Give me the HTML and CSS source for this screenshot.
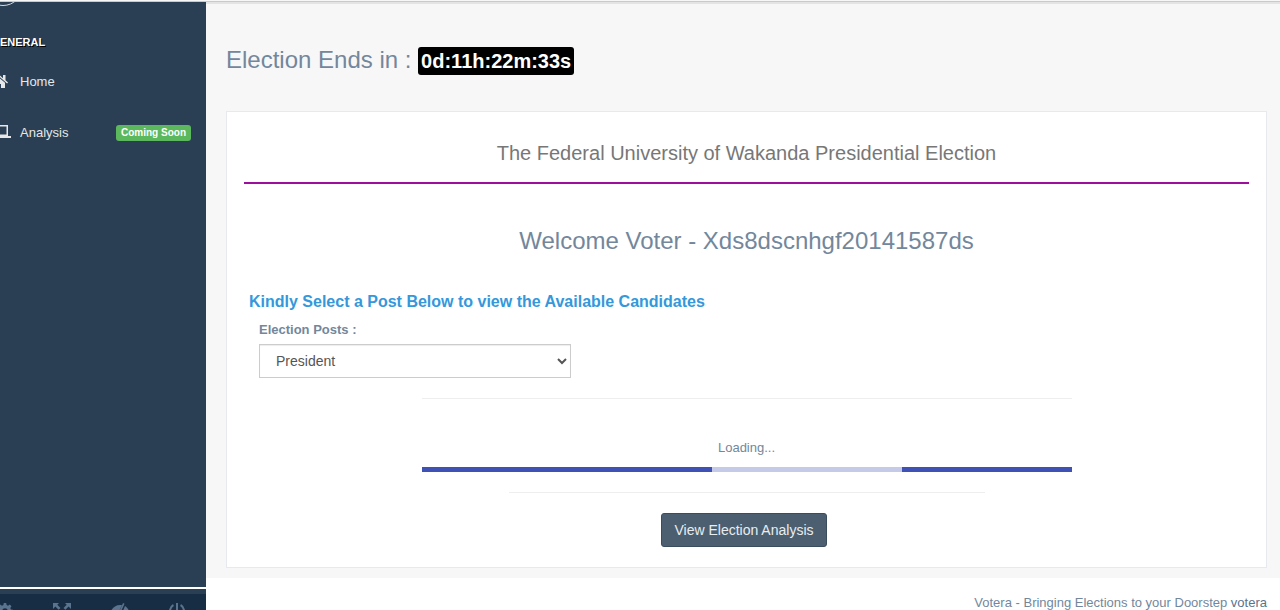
FILE: index.html
```html
<!DOCTYPE html>
<html lang="en">
<head>
    <meta charset="UTF-8">
    <meta name="viewport" content="width=device-width, initial-scale=1.0">
    <title>Votera</title>
    <link rel="stylesheet" href="styles.css">
</head>
<body>
    <div class="top-line"></div>
    <div class="main-container">
        <aside class="left-col">
            <div class="sidebar">
                <div class="profile-pic"></div>
                <h3 class="menu-title">eneral</h3>
                <nav class="side-menu">
                    <a href="#home">
                        <svg class="menu-icon" viewBox="0 0 20 16" aria-hidden="true">
                            <path d="M8.500 4 3 8.800V14h4v-4h3v4h4V8.800z"/>
                            <path d="M8.500 1 12 4.200V1h2.500v5.300l2.500 2.200-.9 1L8.500 2.900 1 9.500l-.9-1z"/>
                        </svg>
                        Home
                    </a>
                    <a href="#analysis">
                        <svg class="menu-icon" viewBox="0 0 20 16" aria-hidden="true">
                            <path fill-rule="evenodd" d="M3 0h14v11H3zM4.500 1.500v8h11v-8z"/>
                            <path d="M0 11h20v2H0z"/>
                        </svg>
                        Analysis
                        <span class="label-success">Coming Soon</span>
                    </a>
                </nav>
            </div>
            <div class="sidebar-footer">
                <a href="#settings" aria-label="Settings">
                    <svg viewBox="0 0 16 16" aria-hidden="true">
                        <path fill-rule="evenodd" d="M6.800 0h2.400l.4 2.100 1.400.6L12.800 1.500l1.700 1.700L13.300 5l.6 1.400 2.100.4v2.400l-2.100.4-.6 1.400 1.200 1.800-1.700 1.700-1.800-1.200-1.400.6-.4 2.100H6.800l-.4-2.100-1.400-.6-1.800 1.200-1.700-1.700L2.700 11l-.6-1.400L0 9.200V6.800l2.100-.4L2.700 5 1.500 3.200l1.700-1.700L5 2.700l1.400-.6zM8 5.200a2.800 2.800 0 1 0 0 5.600 2.800 2.800 0 0 0 0-5.600z"/>
                    </svg>
                </a>
                <a href="#fullscreen" aria-label="Full screen">
                    <svg viewBox="0 0 18 16" aria-hidden="true">
                        <path d="M0 0h6L4.300 1.700l3.200 3.200-1.900 1.900-3.200-3.200L0 6zM18 0v6l-2.400-2.400-3.200 3.200-1.900-1.900 3.200-3.200L12 0zM0 16v-6l2.400 2.400 3.200-3.200 1.900 1.900-3.200 3.200L6 16zM18 16h-6l1.700-1.700-3.200-3.200 1.900-1.900 3.200 3.200L18 10z"/>
                    </svg>
                </a>
                <a href="#lock" aria-label="Lock">
                    <svg viewBox="0 0 18 16" aria-hidden="true">
                        <path d="M11 2.100 5.600 13.500C3.200 12.500 1.200 10.600 0 8c1.600-3.500 4.800-6 9-6 .7 0 1.400 0 2 .1z"/>
                        <path d="M12 0l1.500.7L6.600 16l-1.500-.7z"/>
                        <path d="M14 3c1.700 1 3.100 2.800 4 5-1.600 3.500-4.800 5.800-8.500 6z"/>
                    </svg>
                </a>
                <a href="#logout" aria-label="Logout">
                    <svg viewBox="0 0 18 16" aria-hidden="true">
                        <path d="M8 0h2v8H8zM5 1l.9 1.900a6 6 0 1 0 6.200 0L13 1a8 8 0 1 1-8 0z"/>
                    </svg>
                </a>
            </div>
        </aside>
        <div class="right-col">
            <main>
                <h1 class="page-title">Election Ends in : <span class="timer">0d:11h:22m:33s</span></h1>
                <section class="panel">
                    <h2 class="election-title">The Federal University of Wakanda Presidential Election</h2>
                    <h3 class="welcome">Welcome Voter - Xds8dscnhgf20141587ds</h3>
                    <h4 class="instruction">Kindly Select a Post Below to view the Available Candidates</h4>
                    <form class="post-form">
                        <label for="post">Election Posts :</label>
                        <select id="post" name="post">
                            <option>President</option>
                        </select>
                    </form>
                    <div class="loader">
                        <p>Loading...</p>
                        <div class="progress"><div class="progress-gap"></div></div>
                    </div>
                    <hr class="divider">
                    <div class="actions">
                        <button type="button" class="btn-dark">View Election Analysis</button>
                    </div>
                </section>
            </main>
            <footer>Votera - Bringing Elections to your Doorstep <a href="#votera">votera</a></footer>
        </div>
    </div>
</body>
</html>
```

FILE: styles.css
```css
* {
    box-sizing: border-box;
}
body {
    margin: 0;
    height: 100vh;
    display: flex;
    flex-direction: column;
    overflow: hidden;
    font-family: "Liberation Sans", Arial, sans-serif;
    font-size: 13px;
    line-height: 18px;
    color: #73879C;
    background-color: #fff;
}
h1, h2, h3, h4, p {
    margin: 0;
    font-weight: normal;
}
a {
    text-decoration: none;
}
.top-line {
    height: 2px;
    flex-shrink: 0;
    background-color: #f7f7f7;
    border-bottom: 1px solid #c8cacb;
}
.main-container {
    flex: 1;
    min-height: 0;
    display: flex;
}

/* sidebar */
.left-col {
    width: 230px;
    margin-left: -24px;
    flex-shrink: 0;
    display: flex;
    flex-direction: column;
}
.sidebar {
    flex: 1;
    overflow: hidden;
    background-color: #2A3F54;
}
.profile-pic {
    width: 40px;
    height: 40px;
    margin: -36px 0 0 7px;
    border: 1px solid #d5dbe0;
    border-radius: 50%;
}
.menu-title {
    padding-left: 24px;
    margin-top: 27px;
    color: #fff;
    font-size: 11px;
    font-weight: bold;
    text-transform: uppercase;
    text-shadow: 1px 1px #000;
}
.side-menu {
    margin-top: 5px;
}
.side-menu a {
    display: flex;
    align-items: center;
    height: 51px;
    padding: 0 15px;
    color: #E7E7E7;
}
.menu-icon {
    width: 20px;
    height: 16px;
    margin-right: 9px;
    fill: #E7E7E7;
}
.label-success {
    margin-left: auto;
    padding: 0 5px;
    border-radius: 3px;
    background-color: #5cb85c;
    color: #fff;
    font-size: 10px;
    font-weight: bold;
    line-height: 16px;
}
.sidebar-footer {
    height: 23px;
    display: flex;
    overflow: hidden;
    border-top: 2px solid #fff;
    background-color: #2A3F54;
}
.sidebar-footer a {
    flex: 1;
    height: 40px;
    margin-top: 5px;
    padding-top: 9px;
    text-align: center;
    background-color: #172D44;
}
.sidebar-footer svg {
    width: 18px;
    height: 16px;
    fill: #5A738E;
}

/* content */
.right-col {
    flex: 1;
    min-width: 0;
    border-top: 2px solid #e2e4e5;
}
main {
    padding: 39px 13px 10px 20px;
    background-color: #F7F7F7;
}
.page-title {
    font-size: 24px;
    line-height: 34px;
}
.timer {
    display: inline-block;
    padding: 0 3px;
    border-radius: 3px;
    background-color: #000;
    color: #fff;
    font-size: 20px;
    font-weight: bold;
    line-height: 28px;
}
.panel {
    margin-top: 34px;
    padding: 24px 17px 20px;
    border: 1px solid #E6E9ED;
    background-color: #fff;
}
.election-title {
    padding-bottom: 12px;
    border-bottom: 2px solid #9b0f9b;
    color: #777;
    font-size: 20px;
    line-height: 34px;
    text-align: center;
}
.welcome {
    margin-top: 40px;
    font-size: 24px;
    line-height: 34px;
    text-align: center;
}
.instruction {
    margin: 34px 5px 0;
    color: #3498DB;
    font-size: 16px;
    font-weight: bold;
    line-height: 20px;
}
.post-form {
    width: 312px;
    margin: 9px 15px 0;
}
.post-form label {
    display: block;
    font-weight: bold;
}
.post-form select {
    display: block;
    width: 100%;
    height: 34px;
    margin-top: 5px;
    padding: 6px 12px;
    border: 1px solid #ccc;
    border-radius: 0;
    background-color: #fff;
    color: #555;
    font-family: inherit;
    font-size: 14px;
    box-shadow: inset 0 1px 1px rgba(0, 0, 0, 0.075);
}
.loader {
    width: 650px;
    max-width: 100%;
    margin: 20px auto 0;
    padding-top: 40px;
    border-top: 1px solid #eee;
    text-align: center;
}
.progress {
    height: 5px;
    margin-top: 10px;
    background-color: #3F51B5;
}
.progress-gap {
    width: 190px;
    height: 100%;
    margin-left: 290px;
    background-color: #C5CAE9;
}
.divider {
    width: 476px;
    max-width: 100%;
    margin: 20px auto;
    border: 0;
    border-top: 1px solid #eee;
}
.actions {
    display: flex;
    justify-content: center;
}
.btn-dark {
    height: 34px;
    margin-right: 5px;
    padding: 0 12px;
    border: 1px solid #394D5F;
    border-radius: 3px;
    background-color: #4B5F71;
    color: #E9EDEF;
    font-family: inherit;
    font-size: 14px;
}
footer {
    padding: 16px 13px;
    text-align: right;
}
footer a {
    color: #5A738E;
}
```
